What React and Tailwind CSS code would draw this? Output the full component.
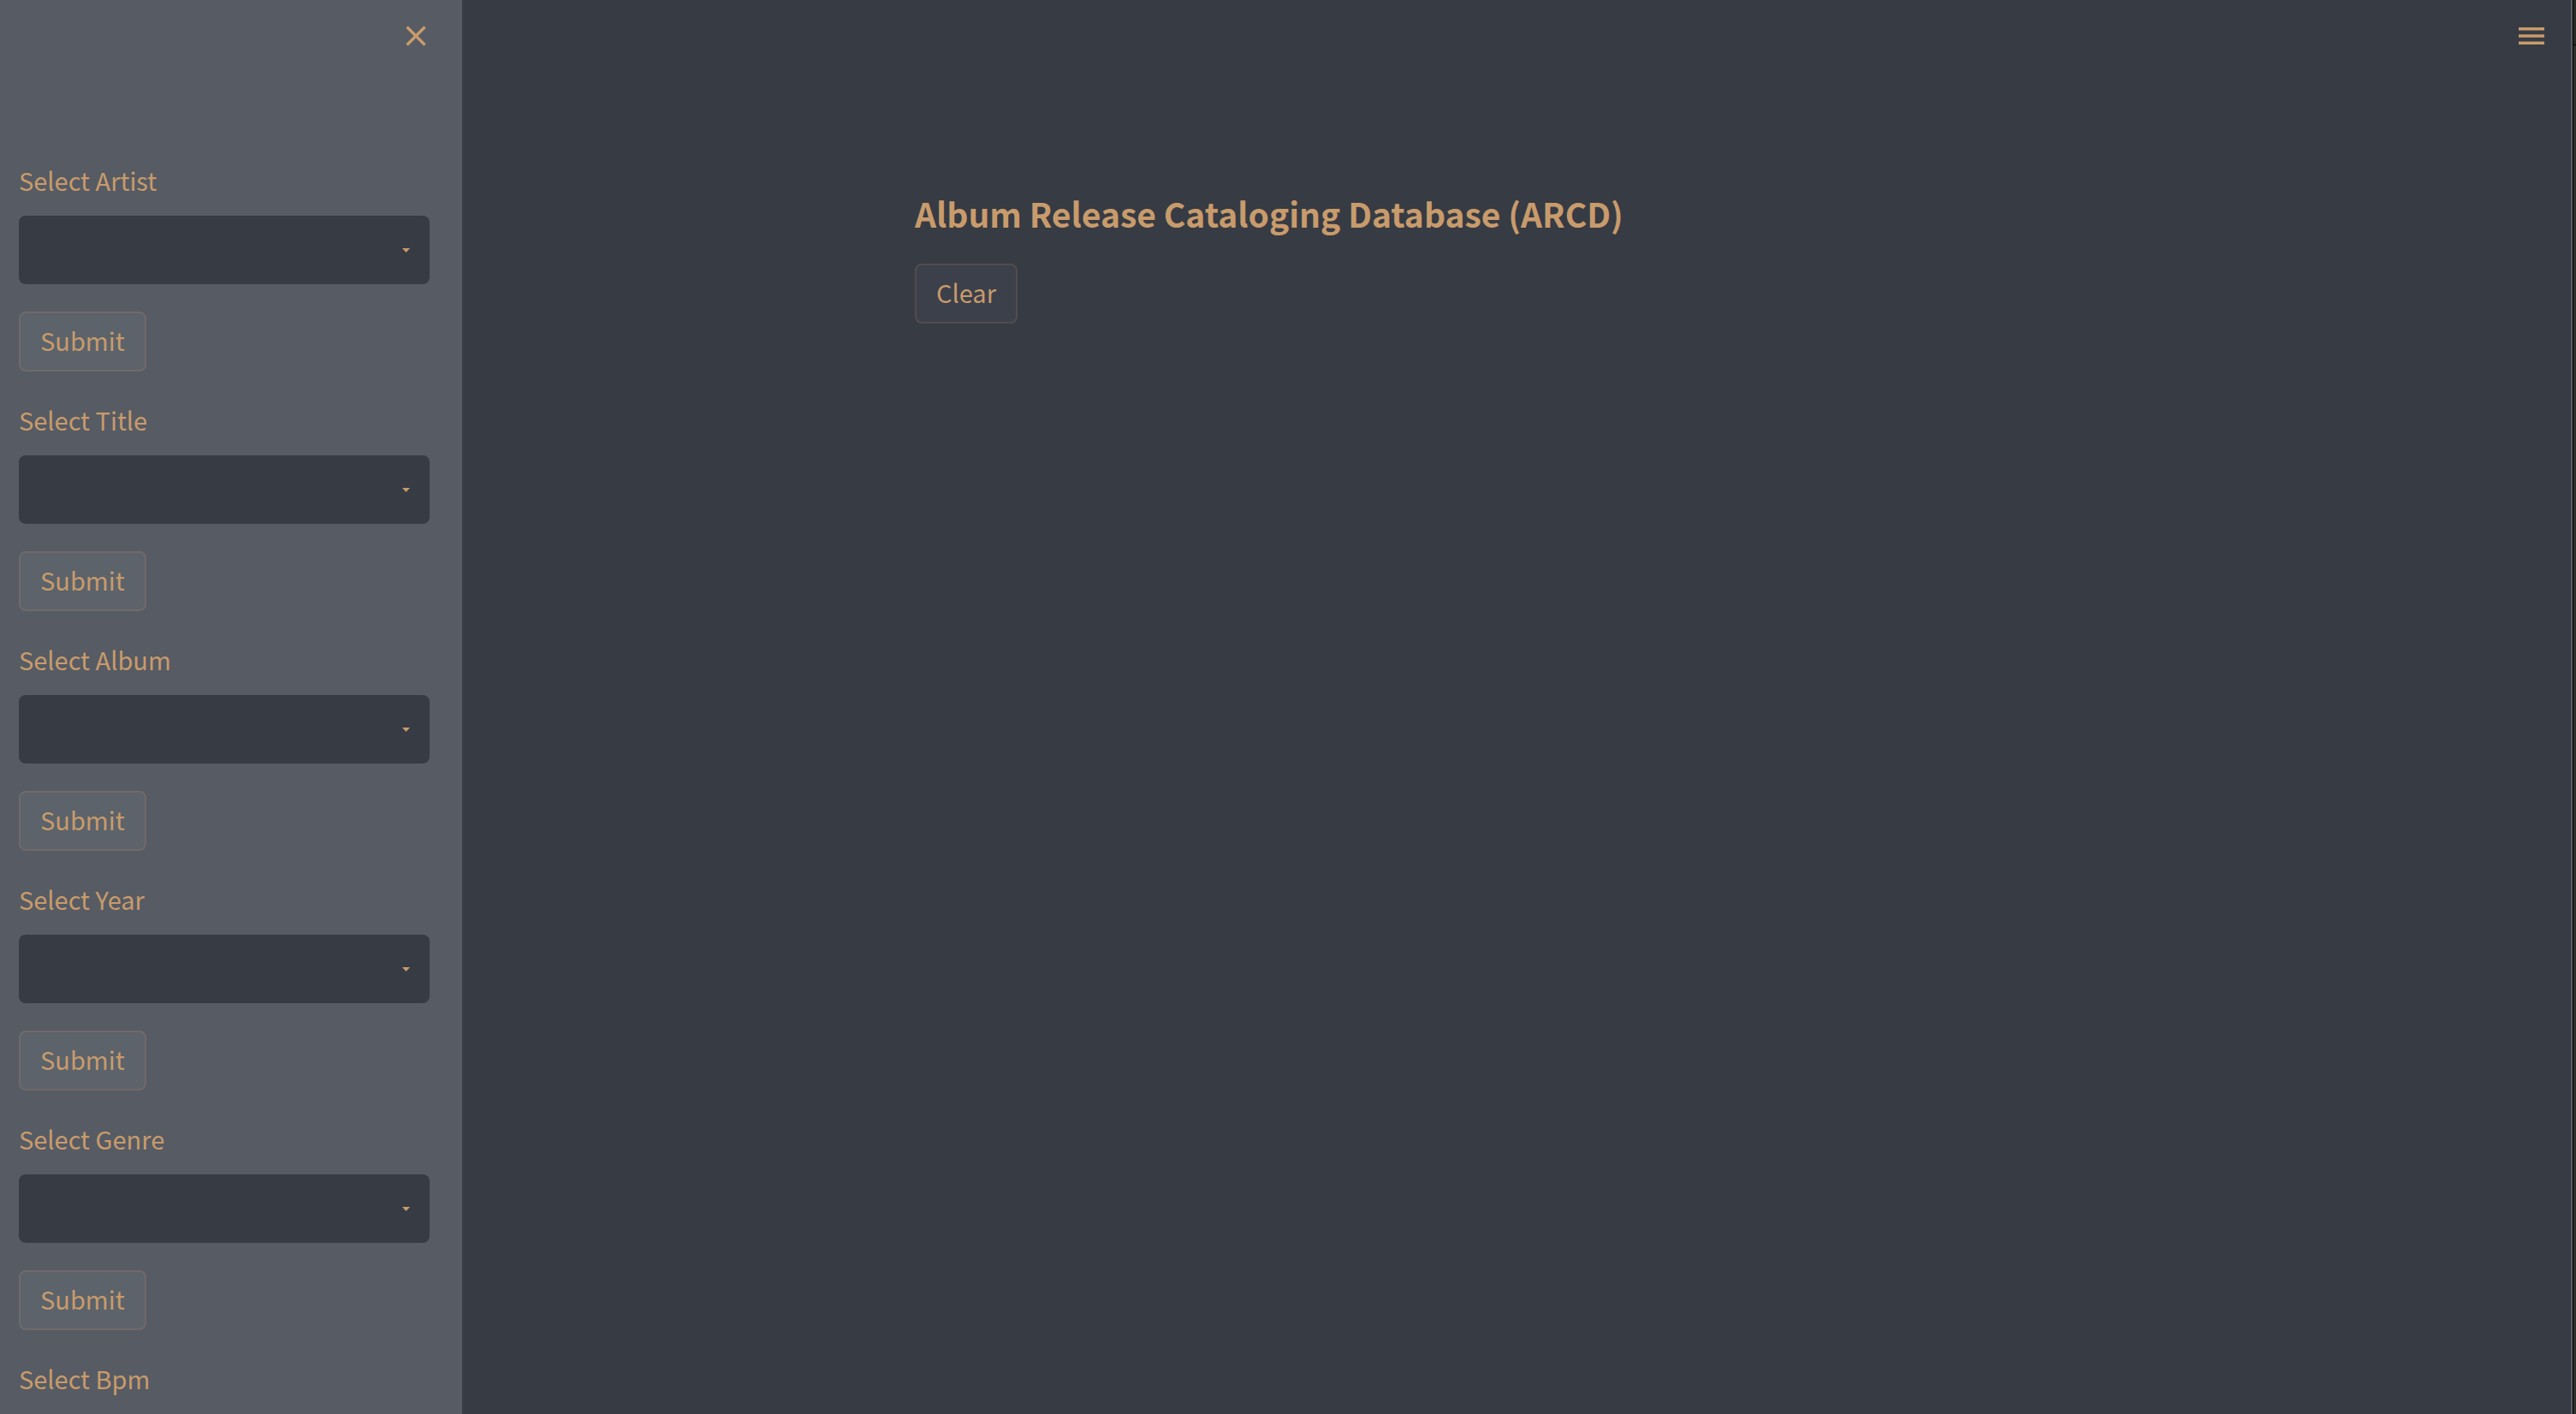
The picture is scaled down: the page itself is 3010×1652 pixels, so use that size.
const fields = ["Artist", "Title", "Album", "Year", "Genre", "Bpm"];

const focus = "focus:outline-none focus-visible:ring-4 focus-visible:ring-[#c89b6c]/40";

function SelectField({ name }) {
  const id = `select-${name.toLowerCase()}`;
  return (
    <form className="flex flex-col items-start" onSubmit={(e) => e.preventDefault()}>
      <label htmlFor={id} className="mb-5 h-11 text-[29px] leading-11">
        Select {name}
      </label>
      <div className="relative mb-8 w-full">
        <select
          id={id}
          className={`h-20 w-full appearance-none rounded-lg bg-[#373b43] px-6 text-[29px] ${focus}`}
        >
          <option value=""></option>
        </select>
        <svg
          className="pointer-events-none absolute top-[38px] right-[23px] h-[5px] w-[9px]"
          viewBox="0 0 9 5"
          fill="currentColor"
          aria-hidden="true"
        >
          <path d="M0 0h9L4.500 5z" />
        </svg>
      </div>
      <button
        type="submit"
        className={`h-[70px] rounded-lg border-2 border-[#71696a] bg-[#5c636a] px-[23px] pb-1 text-[29px] leading-11 ${focus}`}
      >
        Submit
      </button>
    </form>
  );
}

export default function App() {
  return (
    <div className="flex h-screen overflow-hidden bg-[#373b43] font-['Noto_Sans_CJK_SC',sans-serif] text-[#c89b6c]">
      <aside className="w-[540px] shrink-0 overflow-y-auto bg-[#575b63] [scrollbar-width:none]">
        <div className="flex h-[188px] items-start justify-end px-9 pt-6">
          <button type="button" aria-label="Close sidebar" className={`rounded-lg p-[6px] ${focus}`}>
            <svg className="size-6" viewBox="0 0 24 24" fill="none" stroke="currentColor" strokeWidth="3.400" aria-hidden="true">
              <path d="M1.500 1.500l21 21M22.500 1.500l-21 21" />
            </svg>
          </button>
        </div>
        <div className="flex flex-col gap-[34px] pr-[38px] pl-[22px]">
          {fields.map((name) => (
            <SelectField key={name} name={name} />
          ))}
        </div>
      </aside>
      <main className="min-w-0 flex-1">
        <header className="flex h-[84px] items-center justify-end pr-6">
          <button type="button" aria-label="Main menu" className={`rounded-lg p-[7px] ${focus}`}>
            <svg className="h-5 w-[30px]" viewBox="0 0 30 20" fill="currentColor" aria-hidden="true">
              <path d="M0 0h30v3.400H0zM0 8.300h30v3.400H0zM0 16.600h30V20H0z" />
            </svg>
          </button>
        </header>
        <section className="mx-auto flex max-w-[1406px] flex-col items-start pt-[132px]">
          <h1 className="mb-[26px] text-[39px] leading-[66px] font-bold">
            Album Release Cataloging Database (ARCD)
          </h1>
          <button
            type="button"
            className={`h-[70px] rounded-lg border-2 border-[#524c4d] bg-[#3c404a] px-[23px] pb-1 text-[29px] leading-11 ${focus}`}
          >
            Clear
          </button>
        </section>
      </main>
      <div className="w-[2px] shrink-0 bg-[#5a5d64]" />
      <div className="flex w-[4px] shrink-0 flex-col border-l border-black">
        <div className="h-[53px] border-b border-black bg-[#292929]" />
        <div className="flex-1 bg-[#2f2f2f]" />
      </div>
    </div>
  );
}
